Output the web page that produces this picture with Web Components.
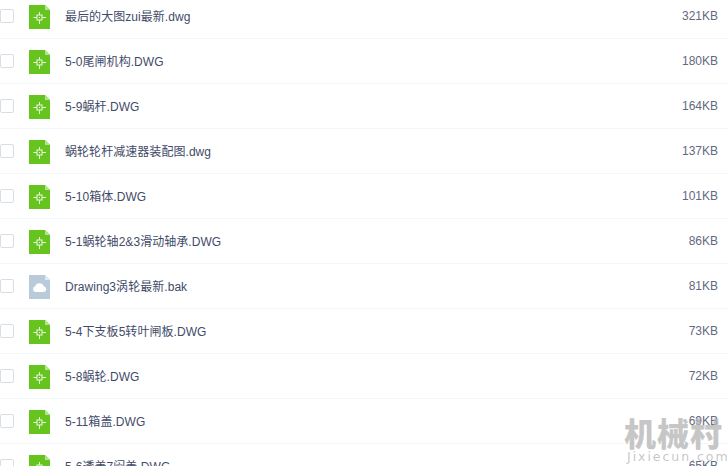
<!DOCTYPE html>
<html><head><meta charset="utf-8"><style>
html,body{margin:0;padding:0;height:466px;overflow:hidden;background:#fff}
body{position:relative;font-family:"Liberation Sans","Noto Sans CJK SC",sans-serif}
file-list{margin-top:-6px}
</style></head><body>
<file-list>
<file-row kind="cad" size="321KB">最后的大图zui最新.dwg</file-row>
<file-row kind="cad" size="180KB">5-0尾闸机构.DWG</file-row>
<file-row kind="cad" size="164KB">5-9蜗杆.DWG</file-row>
<file-row kind="cad" size="137KB">蜗轮轮杆减速器装配图.dwg</file-row>
<file-row kind="cad" size="101KB">5-10箱体.DWG</file-row>
<file-row kind="cad" size="86KB">5-1蜗轮轴2&amp;3滑动轴承.DWG</file-row>
<file-row kind="bak" size="81KB">Drawing3涡轮最新.bak</file-row>
<file-row kind="cad" size="73KB">5-4下支板5转叶闸板.DWG</file-row>
<file-row kind="cad" size="72KB">5-8蜗轮.DWG</file-row>
<file-row kind="cad" size="69KB">5-11箱盖.DWG</file-row>
<file-row kind="cad" size="65KB">5-6透盖7闷盖.DWG</file-row>
</file-list>
<water-mark></water-mark>
<script>
const icons={
cad:`<svg width="21" height="24" viewBox="0 0 21 24"><path d="M0 0H16L21 5V24H0Z" fill="#66c41f"/><path d="M16 0L21 5H16Z" fill="#b5e28f"/><g fill="none" stroke="#eef9e4" stroke-width="1"><rect x="8" y="10" width="5" height="5"/><path d="M10.5 7V10M10.5 15V19M4.5 12.5H8M13 12.5H17"/></g><rect x="10" y="12" width="1" height="1" fill="#fff"/></svg>`,
bak:`<svg width="21" height="24" viewBox="0 0 21 24"><path d="M0 0H16L21 5V24H0Z" fill="#b9cbdb"/><path d="M16 0L21 5H16Z" fill="#e1e9f0"/><path d="M6.5 17a2.8 2.8 0 0 1-.4-5.5 4.6 4.6 0 0 1 8.7-.2 2.9 2.9 0 0 1 .1 5.7Z" fill="#fff"/></svg>`};
class FileList extends HTMLElement{constructor(){super();this.attachShadow({mode:'open'}).innerHTML=`<style>:host{display:flex;flex-direction:column}</style><slot></slot>`}}
class FileRow extends HTMLElement{constructor(){super();this.attachShadow({mode:'open'})}
connectedCallback(){this.shadowRoot.innerHTML=`<style>
:host{display:flex;align-items:center;height:45px;box-sizing:border-box;border-bottom:1px solid #f2f6fd;font-size:12px;color:#3f4b68}
.c{width:14px;height:14px;box-sizing:border-box;border:1px solid #d9dee6;border-radius:2px;background:#fff;margin-right:15px;flex:none}
svg{display:block;flex:none;margin:2px 15px 0 0}
.n{flex:1;white-space:nowrap;margin-bottom:2px;letter-spacing:.05px}
.s{margin:0 10px 0 0;color:#5f6a80;white-space:nowrap}
</style><span class="c"></span>${icons[this.getAttribute('kind')]}<span class="n"><slot></slot></span><span class="s">${this.getAttribute('size')}</span>`}}
class WaterMark extends HTMLElement{constructor(){super();this.attachShadow({mode:'open'}).innerHTML=`<style>
:host{position:absolute;left:624px;top:415px;width:104px;color:rgba(180,180,180,.75);pointer-events:none}
.a{font:900 32px/35px "Noto Sans CJK SC",sans-serif;letter-spacing:1px;white-space:nowrap}
.b{font:400 12.5px/14px "DejaVu Sans",sans-serif;letter-spacing:1.95px;white-space:nowrap;margin-left:3px}
</style><div class="a">机械村</div><div class="b">Jixiecun.com</div>`}}
customElements.define('file-list',FileList);customElements.define('file-row',FileRow);customElements.define('water-mark',WaterMark);
</script></body></html>
